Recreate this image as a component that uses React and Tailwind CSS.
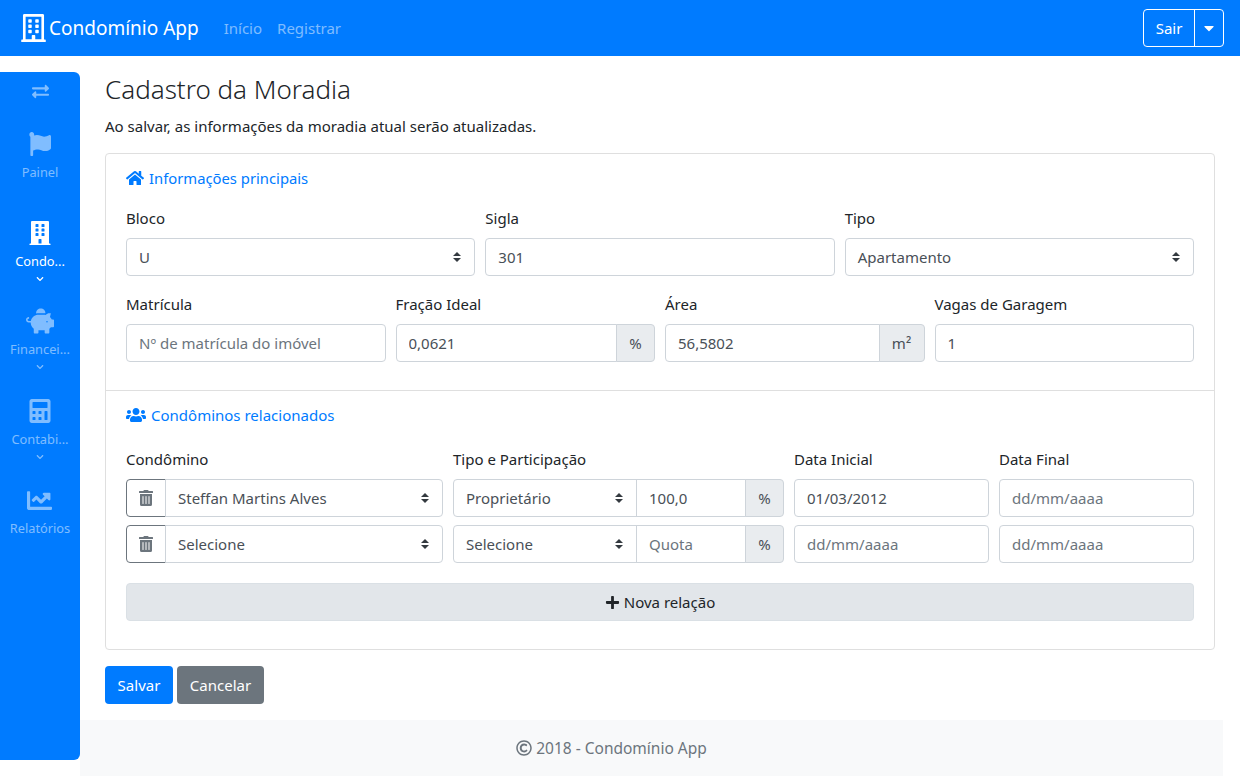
import React from 'react';
import { FaBuilding, FaRegBuilding, FaHome, FaUsers, FaTrashAlt, FaPiggyBank, FaCalculator, FaChartLine, FaFlag, FaExchangeAlt, FaPlus, FaRegCopyright, FaChevronDown, FaCaretDown } from 'react-icons/fa';

function Arrows() {
  return (
    <svg viewBox="0 0 4 5" className="w-2 h-2.5 shrink-0" fill="#343a40"><path d="M2 0L0 2h4zm0 5L0 3h4z" /></svg>
  );
}

function Label({ children }) {
  return <div className="h-[24px] mb-[8px] leading-[24px] text-[#212529] whitespace-nowrap">{children}</div>;
}

function Select({ children, className = '' }) {
  return (
    <div className={`h-[38px] flex items-center justify-between pl-[12px] pr-[13px] border border-[#ced4da] bg-white text-[#495057] whitespace-nowrap ${className}`}>
      <span>{children}</span>
      <Arrows />
    </div>
  );
}

function Input({ value, placeholder, className = '' }) {
  return (
    <input
      readOnly
      value={value || ''}
      placeholder={placeholder}
      className={`h-[38px] min-w-0 w-full px-[12px] border border-[#ced4da] bg-white text-[#495057] placeholder:text-[#6c757d] outline-none ${className}`}
    />
  );
}

function Addon({ children, className = '' }) {
  return (
    <div className={`h-[38px] flex items-center justify-center shrink-0 border border-[#ced4da] bg-[#e9ecef] text-[#495057] ${className}`}>{children}</div>
  );
}

function SideItem({ icon, label, active, chevron, className = '' }) {
  const color = active ? 'text-white' : 'text-white/50';
  return (
    <div className={`flex flex-col items-center ${color} ${className}`}>
      <div className="h-[24px] flex items-center justify-center">{icon}</div>
      <div className="text-[12.8px] leading-[20px] mt-[6px] whitespace-nowrap">{label}</div>
      {chevron && <FaChevronDown className="text-[8px] mt-[4px]" />}
    </div>
  );
}

function RelationRow({ name, type, quota, start, className = '' }) {
  return (
    <div className={`grid grid-cols-[317px_331px_195px_195px] gap-[10px] ${className}`}>
      <div className="flex">
        <div className="w-[40px] h-[38px] shrink-0 flex items-center justify-center border border-[#6c757d] rounded-l-[4px] text-[#6c757d] text-[16px]">
          <FaTrashAlt />
        </div>
        <Select className="flex-1 -ml-px rounded-r-[4px]">{name}</Select>
      </div>
      <div className="flex">
        <Select className="w-[184px] rounded-l-[4px]">{type}</Select>
        <Input value={quota} placeholder="Quota" className="flex-1 -ml-px" />
        <Addon className="w-[39px] -ml-px rounded-r-[4px]">%</Addon>
      </div>
      <Input value={start} placeholder="dd/mm/aaaa" className="rounded-[4px]" />
      <Input placeholder="dd/mm/aaaa" className="rounded-[4px]" />
    </div>
  );
}

export default function App() {
  return (
    <div className="w-[1240px] h-[776px] overflow-hidden flex flex-col bg-white text-[15px] leading-[24px] text-[#212529] [font-family:'Noto_Sans',sans-serif]">
      <nav className="h-[56px] shrink-0 bg-[#007bff] flex items-center pl-[21px] pr-[16px]">
        <FaRegBuilding className="text-white text-[28px] w-[25px] mr-[3px]" />
        <span className="text-white text-[19px] leading-[30px] mr-[25px]">Condomínio App</span>
        <span className="text-white/50 mr-[15px]">Início</span>
        <span className="text-white/50">Registrar</span>
        <div className="ml-auto flex h-[38px] border border-white rounded-[4px] text-white">
          <div className="w-[51px] flex items-center justify-center border-r border-white">Sair</div>
          <div className="w-[28px] flex items-center justify-center"><FaCaretDown className="text-[16px]" /></div>
        </div>
      </nav>
      <div className="flex-1 flex min-h-0">
        <aside className="w-[80px] h-[688px] mt-[16px] shrink-0 bg-[#007bff] rounded-r-[6px] flex flex-col items-center pt-[11px]">
          <FaExchangeAlt className="text-white/50 text-[17px]" />
          <SideItem icon={<FaFlag preserveAspectRatio="none" className="w-[22px] h-[24px]" />} label="Painel" className="mt-[32px]" />
          <SideItem icon={<FaBuilding className="text-[24px]" />} label="Condo..." active chevron className="mt-[39px]" />
          <SideItem icon={<FaPiggyBank className="text-[28px]" />} label="Financei..." chevron className="mt-[26px]" />
          <SideItem icon={<FaCalculator className="text-[24px]" />} label="Contabi..." chevron className="mt-[28px]" />
          <SideItem icon={<FaChartLine className="text-[25px]" />} label="Relatórios" className="mt-[27px]" />
        </aside>
        <div className="w-[1143px] flex flex-col">
          <main className="flex-1 pl-[25px] pr-[8px] pt-[14px]">
            <h1 className="text-[26px] font-light leading-[36px] mt-[1px] text-[#212529]">Cadastro da Moradia</h1>
            <p className="mt-[7px] leading-[24px]">Ao salvar, as informações da moradia atual serão atualizadas.</p>
            <section className="mt-[15px] h-[497px] border border-[#dfdfdf] rounded-[4px] px-[20px] pt-[12px]">
              <div className="flex items-center gap-[5px] text-[#007bff] text-[14.8px] h-[24px]">
                <FaHome className="text-[18px]" />
                <span>Informações principais</span>
              </div>
              <div className="grid grid-cols-3 gap-[10px] mt-[16px]">
                <div><Label>Bloco</Label><Select className="rounded-[4px]">U</Select></div>
                <div><Label>Sigla</Label><Input value="301" className="rounded-[4px]" /></div>
                <div><Label>Tipo</Label><Select className="rounded-[4px]">Apartamento</Select></div>
              </div>
              <div className="grid grid-cols-4 gap-[10px] mt-[16px]">
                <div><Label>Matrícula</Label><Input placeholder="Nº de matrícula do imóvel" className="rounded-[4px]" /></div>
                <div>
                  <Label>Fração Ideal</Label>
                  <div className="flex"><Input value="0,0621" className="rounded-l-[4px]" /><Addon className="w-[39px] -ml-px rounded-r-[4px]">%</Addon></div>
                </div>
                <div>
                  <Label>Área</Label>
                  <div className="flex"><Input value="56,5802" className="rounded-l-[4px]" /><Addon className="w-[46px] -ml-px rounded-r-[4px]">m²</Addon></div>
                </div>
                <div><Label>Vagas de Garagem</Label><Input value="1" className="rounded-[4px]" /></div>
              </div>
              <div className="h-px bg-[#dfdfdf] -mx-[20px] mt-[28px]" />
              <div className="flex items-center gap-[5px] text-[#007bff] h-[24px] mt-[12px]">
                <FaUsers className="text-[20px]" />
                <span>Condôminos relacionados</span>
              </div>
              <div className="grid grid-cols-[317px_331px_195px_195px] gap-[10px] mt-[20px] h-[24px] mb-[8px]">
                <div>Condômino</div>
                <div>Tipo e Participação</div>
                <div>Data Inicial</div>
                <div>Data Final</div>
              </div>
              <RelationRow name="Steffan Martins Alves" type="Proprietário" quota="100,0" start="01/03/2012" />
              <RelationRow name="Selecione" type="Selecione" className="mt-[8px]" />
              <div className="mt-[20px] h-[38px] rounded-[4px] bg-[#e2e6ea] border border-[#dae0e5] flex items-center justify-center gap-[4px]">
                <FaPlus className="text-[15px]" />
                <span>Nova relação</span>
              </div>
            </section>
            <div className="flex gap-[4px] mt-[16px]">
              <div className="h-[38px] w-[68px] rounded-[4px] bg-[#007bff] text-white flex items-center justify-center">Salvar</div>
              <div className="h-[38px] w-[87px] rounded-[4px] bg-[#6c757d] text-white flex items-center justify-center">Cancelar</div>
            </div>
          </main>
          <footer className="h-[56px] bg-[#f8f9fa] shrink-0 flex items-center justify-center gap-[4px] pr-[80px] text-[15.5px] text-[#6c757d]">
            <FaRegCopyright className="text-[16px]" />
            <span>2018 - Condomínio App</span>
          </footer>
        </div>
      </div>
    </div>
  );
}
